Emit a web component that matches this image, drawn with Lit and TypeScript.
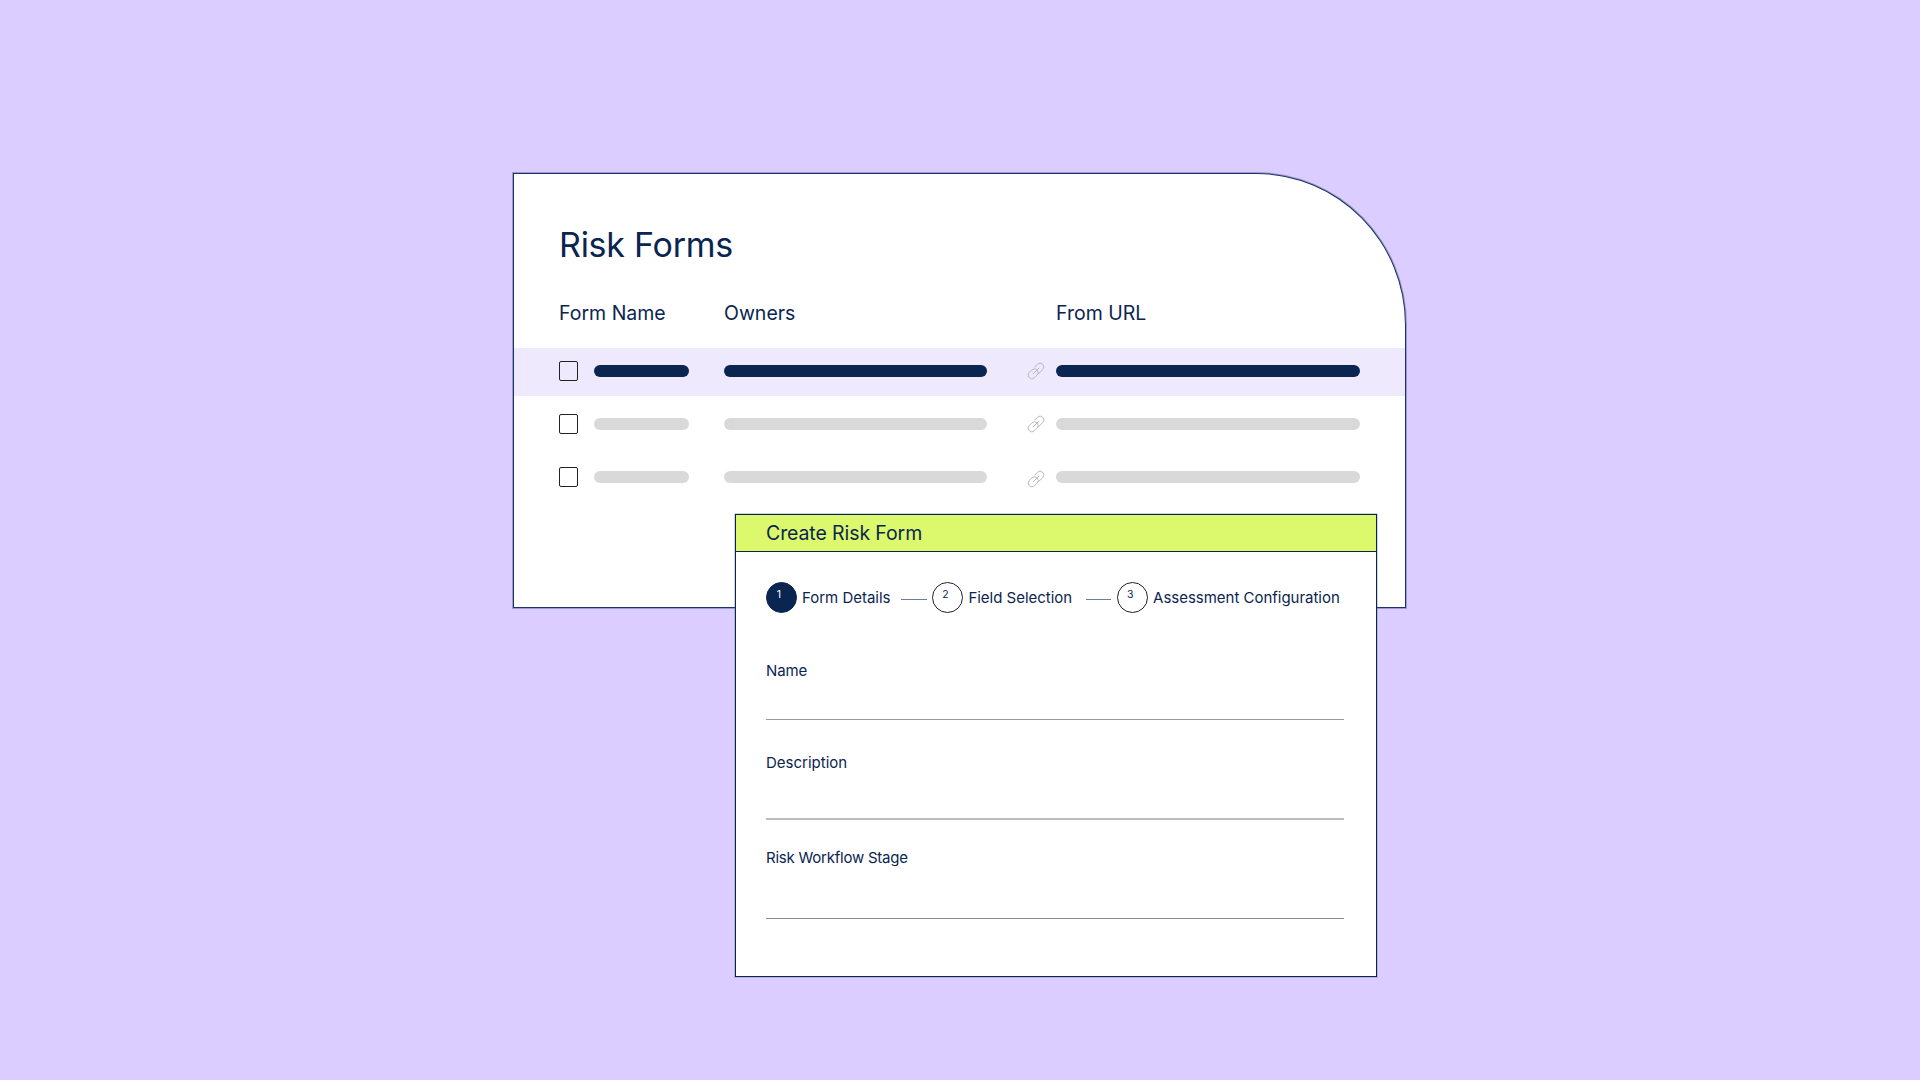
import { LitElement, html, css, svg } from "lit";
import { customElement } from "lit/decorators.js";

const linkIcon = svg`<g transform="rotate(-45 9 9)" fill="none" stroke="currentColor" stroke-width="0.9">
  <rect x="-0.5" y="5.3" width="11" height="7.4" rx="3.7"></rect>
  <path d="M8 12.7 H14.8 A3.7 3.7 0 0 0 14.8 5.3 H10.5"></path>
  <path d="M4.5 9 H13.5"></path>
</g>`;

@customElement("app-root")
export class AppRoot extends LitElement {
  static styles = css`
    :host {
      display: block;
      width: 1920px;
      height: 1080px;
      box-sizing: border-box;
      padding: 173px 0 0 513px;
      background: #dbcdff;
      font-family: "Inter", "Liberation Sans", sans-serif;
      color: #0a2550;
    }
    .card {
      position: relative;
      box-sizing: border-box;
      width: 893px;
      height: 435px;
      background: #fff;
      border: 1px solid #1d3268;
      box-shadow: 0 0 0 1px rgba(60, 79, 128, 0.4);
      border-top-right-radius: 150px 152px;
      padding-top: 51px;
    }
    h1 {
      margin: 0 0 0 45px;
      font-size: 34px;
      font-weight: 400;
      line-height: 40px;
      letter-spacing: -0.25px;
    }
    .grid {
      display: grid;
      grid-template-columns: 165px 332px 304px;
      padding-left: 45px;
    }
    .head {
      margin-top: 34px;
      height: 49px;
      font-size: 19.5px;
      line-height: 28px;
    }
    .row {
      box-sizing: border-box;
      height: 48px;
      padding: 0 0 2px 45px;
      margin-bottom: 5px;
      display: grid;
      grid-template-columns: 19px 111px 298px 69px 304px;
      align-items: center;
      --bar: #d9d9d9;
      --box: #fff;
    }
    .row.on {
      background: #efe9fe;
      --bar: #0a2550;
      --box: #efe9fe;
    }
    .check {
      width: 19px;
      height: 20px;
      box-sizing: border-box;
      border: 1px solid #222;
      border-radius: 2px;
      background: var(--box);
    }
    .bar {
      height: 12px;
      border-radius: 6px;
      background: var(--bar);
    }
    .b1 { margin-left: 16px; width: 95px; }
    .b2 { margin-left: 35px; width: 263px; }
    .link {
      display: block;
      width: 18px;
      height: 18px;
      margin-left: 40px;
      color: #b5b5b5;
      overflow: visible;
    }
    .low .link { margin-top: 4px; }
    .modal {
      position: absolute;
      left: 221px;
      top: 340px;
      box-sizing: border-box;
      width: 642px;
      height: 463px;
      background: #fff;
      border: 1px solid #0a2550;
      box-shadow: 0 0 0 1px rgba(90, 110, 160, 0.3);
    }
    .title {
      box-sizing: border-box;
      height: 37px;
      background: #dcf96e;
      border-bottom: 1px solid #0a2550;
      padding-left: 30px;
      font-size: 19.5px;
      line-height: 37px;
      letter-spacing: -0.1px;
    }
    .steps {
      display: flex;
      align-items: center;
      margin: 30px 0 0 30px;
      height: 31px;
      font-size: 15px;
      letter-spacing: -0.02px;
      white-space: nowrap;
    }
    .circle {
      box-sizing: border-box;
      flex: none;
      width: 31px;
      height: 31px;
      border-radius: 50%;
      border: 1px solid #222;
      display: flex;
      justify-content: center;
      padding: 6px 5px 0 0;
      font-size: 10.5px;
      line-height: 12px;
      margin-right: 5px;
    }
    .circle.on {
      background: #0a2550;
      border-color: #0a2550;
      color: #fff;
    }
    .sep {
      flex: none;
      height: 1px;
      margin-top: 3px;
      background: #6f7da0;
    }
    .s1 { width: 26px; margin-left: 11px; margin-right: 5px; }
    .s2 { width: 25px; margin-left: 14px; margin-right: 6px; }
    .field {
      margin-left: 30px;
      width: 578px;
    }
    .label {
      font-size: 15px;
      line-height: 20px;
    }
    .input {
      box-sizing: border-box;
      border-bottom: 1px solid #999;
    }
    .field.mid .input { border-bottom: 2px solid #bdbdbd; }
    .field.last .input { border-bottom-color: #888; }
  `;

  private rows = [true, false, false];
  private steps = ["Form Details", "Field Selection", "Assessment Configuration"];
  private fields = [
    { label: "Name", top: 48, h: 39, ls: -0.1, cls: "" },
    { label: "Description", top: 33, h: 47, ls: 0, cls: "mid" },
    { label: "Risk Workflow Stage", top: 28, h: 51, ls: -0.23, cls: "last" },
  ];

  render() {
    return html`
      <div class="card">
        <h1>Risk Forms</h1>
        <div class="grid head">
          <span>Form Name</span><span>Owners</span><span>From URL</span>
        </div>
        ${this.rows.map(
          (on, i) => html`
            <div class="row ${on ? "on" : ""} ${i === 2 ? "low" : ""}">
              <div class="check"></div>
              <div class="bar b1"></div>
              <div class="bar b2"></div>
              <svg class="link" viewBox="0 0 18 18">${linkIcon}</svg>
              <div class="bar"></div>
            </div>
          `
        )}
        <div class="modal">
          <div class="title">Create Risk Form</div>
          <div class="steps">
            ${this.steps.map(
              (s, i) => html`
                ${i > 0 ? html`<div class="sep s${i}"></div>` : ""}
                <div class="circle ${i === 0 ? "on" : ""}">${i + 1}</div>
                <span>${s}</span>
              `
            )}
          </div>
          ${this.fields.map(
            (f) => html`
              <div class="field ${f.cls}" style="margin-top:${f.top}px">
                <div class="label" style="letter-spacing:${f.ls}px">${f.label}</div>
                <div class="input" style="height:${f.h}px"></div>
              </div>
            `
          )}
        </div>
      </div>
    `;
  }
}
